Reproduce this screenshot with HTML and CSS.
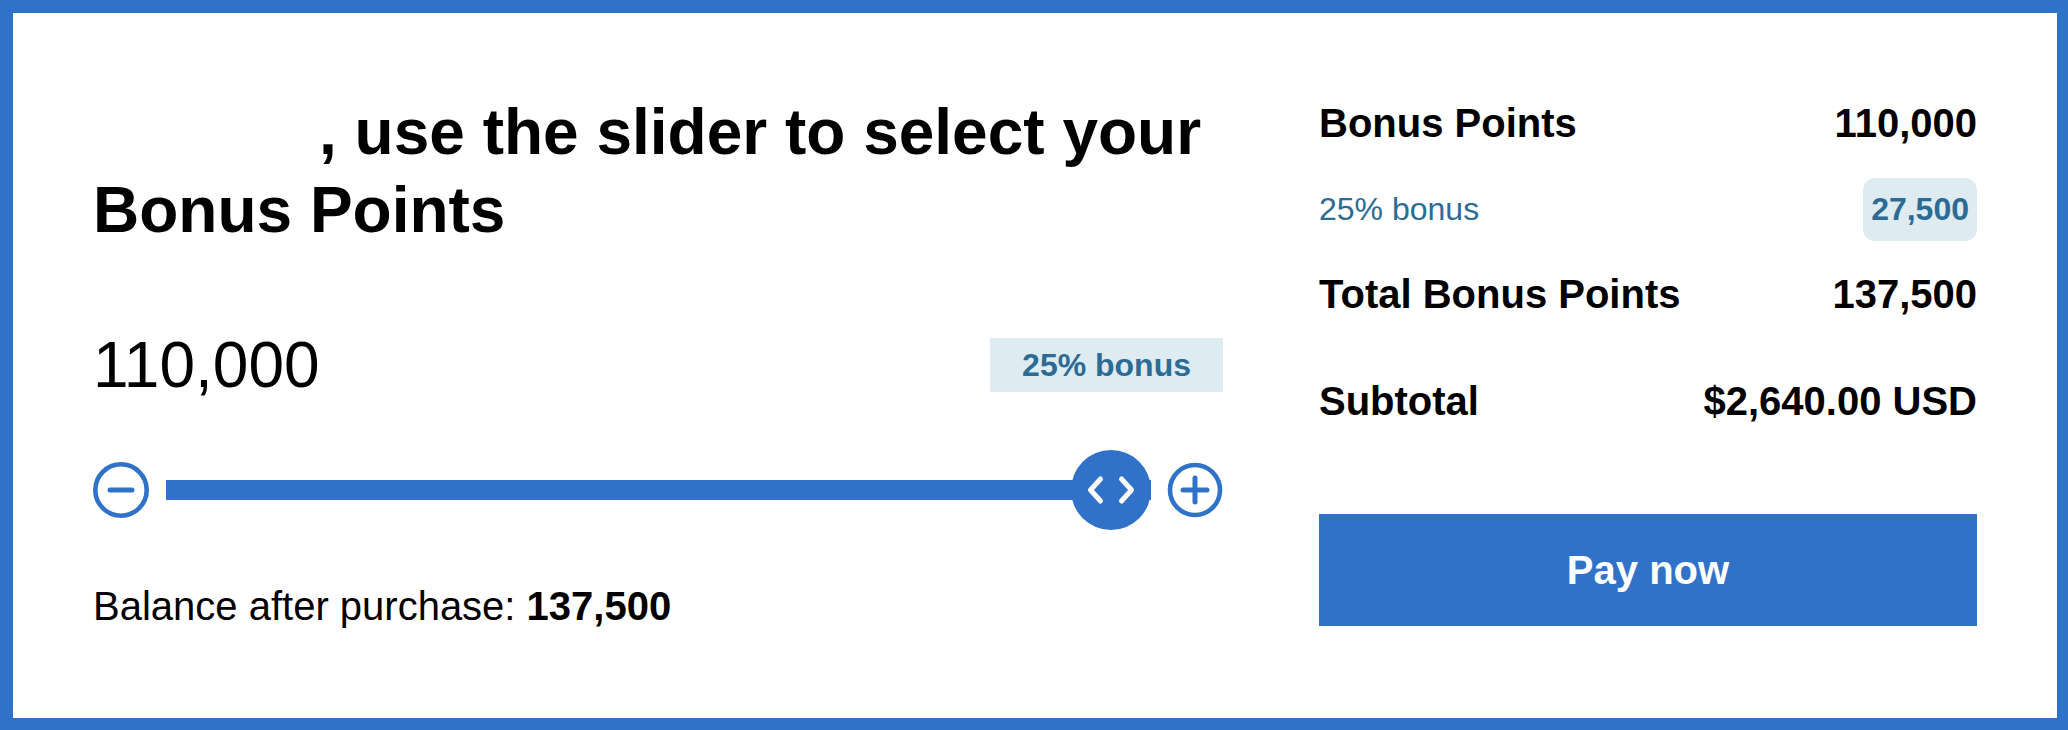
FILE: index.html
```html
<!DOCTYPE html>
<html lang="en">

<head>
  <meta charset="UTF-8">
  <meta name="viewport" content="width=device-width, initial-scale=1.0">
  <title>Buy Bonus Points</title>

  <link rel="stylesheet" href="styles.css">
</head>

<body>
  <div id="purchase">
    <section class="picker">
      <h1><span class="member-name"></span>, use the slider to select your Bonus Points</h1>

      <div class="amount-row">
        <span class="amount">110,000</span>
        <span class="bonus-badge">25% bonus</span>
      </div>

      <div class="slider">
        <button class="step" aria-label="Decrease">
          <svg width="56" height="56" viewBox="0 0 56 56">
            <circle cx="28" cy="28" r="25.7" fill="none" stroke="#3072c7" stroke-width="4.6" />
            <path d="M17 28H39" stroke="#3072c7" stroke-width="5" stroke-linecap="round" />
          </svg>
        </button>
        <div class="track">
          <span class="thumb">
            <svg width="80" height="80" viewBox="0 0 80 80">
              <path d="M29.5 29L19.5 40L29.5 51" fill="none" stroke="#fff" stroke-width="5" stroke-linecap="round" stroke-linejoin="round" />
              <path d="M50.5 29L60.5 40L50.5 51" fill="none" stroke="#fff" stroke-width="5" stroke-linecap="round" stroke-linejoin="round" />
            </svg>
          </span>
        </div>
        <button class="step" aria-label="Increase">
          <svg width="56" height="56" viewBox="0 0 56 56">
            <circle cx="28" cy="28" r="25" fill="none" stroke="#3072c7" stroke-width="4.6" />
            <path d="M16 28H40M28 16V40" stroke="#3072c7" stroke-width="5" stroke-linecap="round" />
          </svg>
        </button>
      </div>

      <p class="balance">Balance after purchase: <strong>137,500</strong></p>
    </section>

    <section class="summary">
      <div class="line strong">
        <span>Bonus Points</span>
        <span>110,000</span>
      </div>
      <div class="line bonus">
        <span>25% bonus</span>
        <span class="pill">27,500</span>
      </div>
      <div class="line strong total">
        <span>Total Bonus Points</span>
        <span>137,500</span>
      </div>
      <div class="line strong subtotal">
        <span>Subtotal</span>
        <span>$2,640.00 USD</span>
      </div>
      <button class="pay">Pay now</button>
    </section>
  </div>
</body>

</html>
```

FILE: styles.css
```css
body {
  margin: 0;
  font-family: "Liberation Sans", Arial, sans-serif;
  color: #000;
}

#purchase {
  border: solid #3072c7;
  border-width: 13px 11px 12px 13px;
  box-sizing: border-box;
  display: grid;
  gap: 96px;
  grid-template-columns: 1130px 658px;
  min-height: 730px;
  padding: 80px;
}

h1 {
  font-size: 64px;
  line-height: 78px;
  margin: 0;
}

.member-name {
  display: inline-block;
  width: 226px;
}

.amount-row {
  align-items: center;
  display: flex;
  height: 54px;
  justify-content: space-between;
  margin-top: 89px;
}

.amount {
  font-size: 64px;
  line-height: 1;
}

.bonus-badge {
  background-color: #deebf1;
  color: #2c6c94;
  font-size: 32px;
  font-weight: bold;
  line-height: 54px;
  padding: 0 32px;
}

.slider {
  align-items: center;
  display: flex;
  height: 80px;
  margin-top: 58px;
}

.step {
  background: none;
  border: 0;
  display: flex;
  padding: 0;
}

.track {
  background-color: #3072c7;
  flex: 1;
  height: 20px;
  margin: 0 16px 0 17px;
  position: relative;
}

.thumb {
  background-color: #3072c7;
  border-radius: 50%;
  display: flex;
  height: 80px;
  position: absolute;
  right: 0;
  top: -30px;
  width: 80px;
}

.balance {
  font-size: 40px;
  line-height: 48px;
  margin: 52px 0 0;
}

.summary {
  display: flex;
  flex-direction: column;
  padding-top: 6px;
}

.line {
  align-items: center;
  display: flex;
  justify-content: space-between;
}

.line.strong {
  font-size: 40px;
  font-weight: bold;
  line-height: 48px;
}

.line.bonus {
  color: #2c6c94;
  font-size: 32px;
  margin-top: 31px;
}

.pill {
  background-color: #deebf1;
  border-radius: 12px;
  font-weight: bold;
  line-height: 63px;
  padding: 0 8px;
}

.line.total {
  margin-top: 29px;
}

.line.subtotal {
  margin-top: 59px;
}

.pay {
  background-color: #3072c7;
  border: 0;
  color: #fff;
  font-family: inherit;
  font-size: 40px;
  font-weight: bold;
  height: 112px;
  margin-top: 89px;
}
```
